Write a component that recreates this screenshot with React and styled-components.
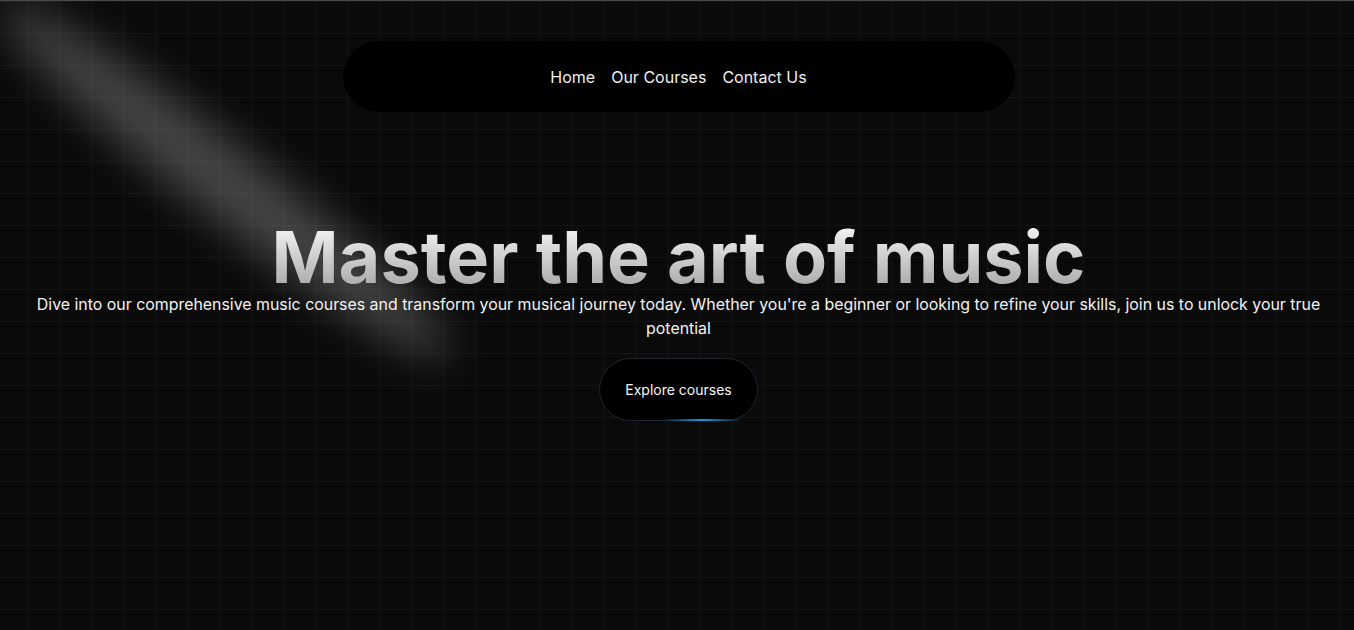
import React from 'react';
import styled, { createGlobalStyle } from 'styled-components';

const GlobalStyle = createGlobalStyle`
  html, body {
    margin: 0;
    padding: 0;
    background: #0a0a0a;
  }
  body {
    font-family: Inter, "Noto Sans", sans-serif;
    -webkit-font-smoothing: antialiased;
  }
`;

const Page = styled.div`
  position: relative;
  width: 100%;
  height: 630px;
  box-sizing: border-box;
  overflow: hidden;
  border-top: 1px solid #4b4b4b;
  background-color: #0a0a0a;
  background-image:
    linear-gradient(to right, #131414 1px, transparent 1px),
    linear-gradient(to bottom, #131414 1px, transparent 1px);
  background-size: 32px 32px;
  background-position: 27px 0;
  padding-left: 3px;
  display: flex;
  flex-direction: column;
  align-items: center;
`;

const Beam = styled.svg`
  position: absolute;
  left: 0;
  top: 0;
  width: 700px;
  height: 600px;
  pointer-events: none;
`;

const NavBar = styled.nav`
  position: relative;
  z-index: 1;
  margin-top: 40px;
  width: 672px;
  height: 71px;
  border-radius: 999px;
  background: #000;
  display: flex;
  align-items: center;
  justify-content: center;
  gap: 16px;
`;

const NavLink = styled.a`
  color: #f0f0f0;
  font-size: 16px;
  text-decoration: none;
  cursor: pointer;

  &:hover {
    color: #fff;
  }
`;

const Hero = styled.section`
  position: relative;
  z-index: 1;
  margin-top: 109px;
  display: flex;
  flex-direction: column;
  align-items: center;
  padding: 0 16px;
`;

const Title = styled.h1`
  margin: 0;
  font-size: 72px;
  line-height: 1;
  font-weight: 700;
  text-align: center;
  background: linear-gradient(to bottom, #fafafa, #a3a3a3);
  -webkit-background-clip: text;
  background-clip: text;
  color: transparent;
`;

const Lead = styled.p`
  margin: 0;
  font-size: 15.9px;
  line-height: 24px;
  color: #f2f2f2;
  text-align: center;
`;

const CtaButton = styled.button`
  position: relative;
  margin-top: 17px;
  height: 63px;
  padding: 0 25px;
  border-radius: 999px;
  border: 1px solid #1c2533;
  background: #000;
  color: #f5f5f5;
  font-family: inherit;
  font-size: 14px;
  cursor: pointer;
`;

const Glow = styled.span`
  position: absolute;
  bottom: -1px;
  left: 62px;
  width: 80px;
  height: 2px;
  background: linear-gradient(to right, rgba(14, 165, 233, 0), rgba(14, 165, 233, 0.95), rgba(14, 165, 233, 0));
`;

export default function App() {
  return (
    <>
      <GlobalStyle />
      <Page>
        <Beam viewBox="0 0 700 600">
          <defs>
            <filter id="beamBlur" x="-50%" y="-50%" width="200%" height="200%">
              <feGaussianBlur stdDeviation="22" />
            </filter>
          </defs>
          <ellipse
            cx="225"
            cy="180"
            rx="285"
            ry="36"
            fill="#ffffff"
            opacity="0.24"
            filter="url(#beamBlur)"
            transform="rotate(38 225 180)"
          />
        </Beam>
        <NavBar>
          <NavLink>Home</NavLink>
          <NavLink>Our Courses</NavLink>
          <NavLink>Contact Us</NavLink>
        </NavBar>
        <Hero>
          <Title>Master the art of music</Title>
          <Lead>
            Dive into our comprehensive music courses and transform your musical journey today. Whether you're a
            beginner or looking to refine your skills, join us to unlock your true potential
          </Lead>
          <CtaButton>
            Explore courses
            <Glow />
          </CtaButton>
        </Hero>
      </Page>
    </>
  );
}
